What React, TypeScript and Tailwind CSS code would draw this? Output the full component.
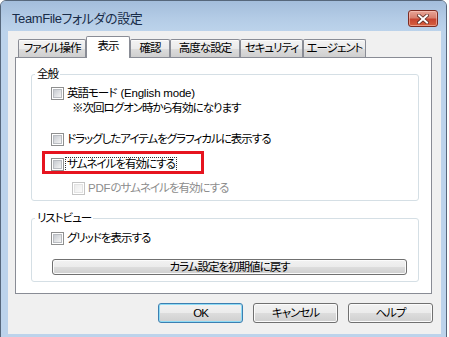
import React from "react";

function Box({ disabled = false }: { disabled?: boolean }) {
  return (
    <span
      className={`flex w-[13px] h-[13px] shrink-0 border bg-white p-[1px] ${
        disabled ? "border-[#c5c5c5]" : "border-[#8e8f8f]"
      }`}
    >
      <span
        className={`flex-1 border ${
          disabled
            ? "border-[#e3e3e3] bg-[linear-gradient(135deg,#ececec,#fafafa)]"
            : "border-[#b9bcc1] bg-[linear-gradient(135deg,#c6cad0,#f4f4f4)]"
        }`}
      />
    </span>
  );
}

function Tab({ label, w, selected = false }: { label: string; w: string; selected?: boolean }) {
  if (selected) {
    return (
      <div
        className={`${w} h-[22px] -mb-[1px] relative z-10 flex items-center justify-center whitespace-nowrap pb-[3px] bg-white border border-b-0 border-[#898c95] rounded-t-[2px]`}
      >
        {label}
      </div>
    );
  }
  return (
    <div
      className={`${w} h-[18px] flex items-center justify-center whitespace-nowrap border border-b-0 border-[#898c95] rounded-t-[2px] bg-[linear-gradient(#f3f3f3,#ebebeb_50%,#dddddd_50%,#cfcfcf)] shadow-[inset_0_1px_0_#fcfcfc]`}
    >
      {label}
    </div>
  );
}

function Btn({ label, def = false }: { label: string; def?: boolean }) {
  return (
    <div
      className={`w-[85px] h-[20px] flex items-center justify-center rounded-[3px] border bg-[linear-gradient(#f2f2f2,#ebebeb_50%,#dddddd_50%,#cfcfcf)] ${
        def
          ? "border-[#3c7fb1] shadow-[inset_0_0_0_1px_#8fdbf5]"
          : "border-[#707070] shadow-[inset_0_0_0_1px_#fbfbfb]"
      }`}
    >
      {label}
    </div>
  );
}

export default function App() {
  return (
    <div className="w-[449px] h-[337px] overflow-hidden bg-white text-black text-[11.5px] tracking-[-1px] leading-[13px] font-['Liberation_Sans','Noto_Sans_CJK_JP',sans-serif] [font-feature-settings:'palt']">
      <div className="w-[447px] h-[338px] flex flex-col rounded-t-[6px] border border-[#56677b] bg-[#bcd3eb]">
        {/* Title bar */}
        <div className="h-[30px] shrink-0 flex items-start justify-between rounded-t-[5px] bg-[linear-gradient(#a3bddb,#b4cce6_60%,#bcd3eb)]">
          <span className="mt-[10px] ml-[11px] text-[13px] tracking-[-0.4px] leading-[16px] text-[#182c48]">
            TeamFileフォルダの設定
          </span>
          <div className="mt-[9px] mr-[8px] w-[30px] h-[17px] rounded-[3px] border border-[#7d2c22] flex items-center justify-center bg-[linear-gradient(#e8a597,#d8806f_45%,#c74430_55%,#d6613f)] shadow-[inset_0_0_0_1px_rgba(255,210,200,0.5)]">
            <svg width="12" height="10" viewBox="0 0 12 10">
              <path d="M2 1.5 L10 8.5 M10 1.5 L2 8.5" stroke="#5a2a22" strokeWidth="3.6" strokeLinecap="square" />
              <path d="M2 1.5 L10 8.5 M10 1.5 L2 8.5" stroke="#ffffff" strokeWidth="2" strokeLinecap="square" />
            </svg>
          </div>
        </div>

        {/* Client area */}
        <div className="ml-[7px] mr-[5px] h-[303px] shrink-0 bg-[#f0f0f0] flex flex-col">
          <div className="ml-[7px] w-[417px] mt-[5px] flex flex-col">
            {/* Tabs */}
            <div className="flex items-end pl-[3px] h-[21px]">
              <Tab label="ファイル操作" w="w-[68px]" />
              <Tab label="表示" w="w-[44px]" selected />
              <Tab label="確認" w="w-[40px]" />
              <Tab label="高度な設定" w="w-[70px]" />
              <Tab label="セキュリティ" w="w-[63px]" />
              <Tab label="エージェント" w="w-[63px]" />
            </div>
            {/* Panel */}
            <div className="h-[237px] border border-[#898c95] bg-white flex flex-col pl-[15px]">
              {/* Group 1 */}
              <div className="relative mt-[16px] w-[388px] h-[127px] shrink-0 rounded-[3px] border border-[#d5dfe5] pl-[19px] flex flex-col">
                <span className="absolute -top-[7px] left-[3px] px-[2px] bg-white">全般</span>
                <div className="mt-[12px] flex items-center h-[13px] gap-[3px] whitespace-nowrap">
                  <Box />
                  <span>
                    英語モード<span className="ml-[4px] tracking-[-0.2px]">(English mode)</span>
                  </span>
                </div>
                <div className="mt-[2px] pl-[21px] h-[13px] whitespace-nowrap">※次回ログオン時から有効になります</div>
                <div className="mt-[18px] flex items-center h-[13px] gap-[3px] whitespace-nowrap">
                  <Box />
                  <span>ドラッグしたアイテムをグラフィカルに表示する</span>
                </div>
                <div className="mt-[12px] flex items-center h-[13px] gap-[2px] whitespace-nowrap">
                  <Box />
                  <span className="px-[1px] outline outline-1 outline-dotted outline-[#333]">サムネイルを有効にする</span>
                </div>
                <div className="mt-[11px] pl-[21px] flex items-center h-[13px] gap-[3px] text-[#8d8d8d] whitespace-nowrap">
                  <Box disabled />
                  <span>
                    <span className="tracking-[-0.2px]">PDF</span>のサムネイルを有効にする
                  </span>
                </div>
                <div className="absolute left-[10px] top-[76px] w-[162px] h-[23px] border-[3px] border-[#e6141f]" />
              </div>
              {/* Group 2 */}
              <div className="relative mt-[17px] w-[388px] h-[64px] shrink-0 rounded-[3px] border border-[#d5dfe5] pl-[19px] flex flex-col">
                <span className="absolute -top-[7px] left-[3px] px-[2px] bg-white">リストビュー</span>
                <div className="mt-[13px] flex items-center h-[13px] gap-[3px] whitespace-nowrap">
                  <Box />
                  <span>グリッドを表示する</span>
                </div>
                <div className="mt-[14px] ml-[1px] w-[355px] h-[16px] flex items-center justify-center rounded-[3px] border border-[#707070] bg-[linear-gradient(#f2f2f2,#ebebeb_50%,#dddddd_50%,#cfcfcf)] shadow-[inset_0_0_0_1px_#fbfbfb]">
                  カラム設定を初期値に戻す
                </div>
              </div>
            </div>
          </div>
          {/* Bottom buttons */}
          <div className="mt-[9px] mr-[8px] flex justify-end gap-[10px]">
            <Btn label="OK" def />
            <Btn label="キャンセル" />
            <Btn label="ヘルプ" />
          </div>
        </div>
      </div>
    </div>
  );
}
